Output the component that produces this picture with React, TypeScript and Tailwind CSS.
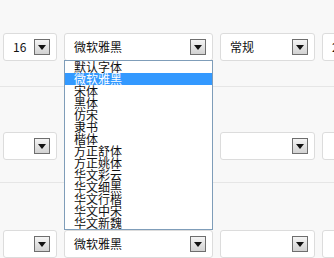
import React from "react";

const fontStack = '"Noto Sans CJK SC", "Liberation Sans", sans-serif';

function Arrow() {
  return (
    <div className="w-[16px] h-[16px] border border-[#6e6e6e] bg-gradient-to-b from-[#f4f4f4] to-[#d2d2d2] flex items-center justify-center shrink-0">
      <svg width="8" height="5" viewBox="0 0 8 5">
        <polygon points="0,0 8,0 4,5" fill="#111" />
      </svg>
    </div>
  );
}

function Box({
  w,
  text,
  children,
}: {
  w: string;
  text?: string;
  children?: React.ReactNode;
}) {
  return (
    <div className={`relative shrink-0 ${w}`}>
      <div className="h-[28px] bg-white border border-[#dcdcdc] rounded-[3px] flex items-center pl-[9px] pr-[6px]">
        <span className="flex-1 text-[12px] leading-[18px] text-[#111] whitespace-nowrap">
          {text}
        </span>
        <Arrow />
      </div>
      {children}
    </div>
  );
}

const fonts = [
  "默认字体",
  "微软雅黑",
  "宋体",
  "黑体",
  "仿宋",
  "隶书",
  "楷体",
  "方正舒体",
  "方正姚体",
  "华文彩云",
  "华文细黑",
  "华文行楷",
  "华文中宋",
  "华文新魏",
];

function Row({
  c1,
  c2,
  c3,
  c4,
  list,
}: {
  c1?: string;
  c2?: string;
  c3?: string;
  c4?: string;
  list?: boolean;
}) {
  return (
    <div className="flex gap-[7px] pl-[3px]">
      <Box w="w-[54px]" text={c1} />
      <Box w="w-[149px]" text={c2}>
        {list && (
          <div className="absolute left-0 top-[27px] w-full z-10 bg-white border border-[#7f9db9]">
            {fonts.map((f, i) => (
              <div
                key={f}
                className={`h-[12px] flex items-center text-[12px] leading-[12px] pl-[9px] whitespace-nowrap ${
                  i === 1 ? "bg-[#3399ff] text-white" : "text-[#111]"
                }`}
              >
                {f}
              </div>
            ))}
          </div>
        )}
      </Box>
      <Box w="w-[95px]" text={c3} />
      <Box w="w-[95px]" text={c4} />
    </div>
  );
}

export default function App() {
  return (
    <div
      className="w-[334px] h-[258px] overflow-hidden bg-[#f8f8f8]"
      style={{ fontFamily: fontStack }}
    >
      <div className="pt-[33px] pb-[25px] border-b border-[#e6e6e6] relative z-10">
        <Row c1="16" c2="微软雅黑" c3="常规" c4="2" list />
      </div>
      <div className="pt-[45px] pb-[22px] border-b border-[#e6e6e6]">
        <Row />
      </div>
      <div className="pt-[47px]">
        <Row c2="微软雅黑" />
      </div>
    </div>
  );
}
